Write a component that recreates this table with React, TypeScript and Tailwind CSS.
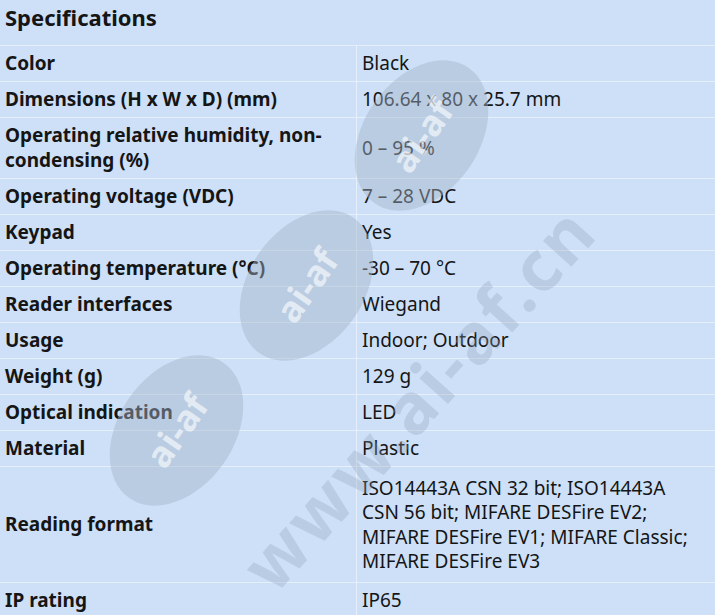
const rows: { label: string; value: string; tall?: boolean }[] = [
  { label: "Color", value: "Black" },
  { label: "Dimensions (H x W x D) (mm)", value: "106.64 x 80 x 25.7 mm" },
  { label: "Operating relative humidity, non-condensing (%)", value: "0 – 95 %" },
  { label: "Operating voltage (VDC)", value: "7 – 28 VDC" },
  { label: "Keypad", value: "Yes" },
  { label: "Operating temperature (°C)", value: "-30 – 70 °C" },
  { label: "Reader interfaces", value: "Wiegand" },
  { label: "Usage", value: "Indoor; Outdoor" },
  { label: "Weight (g)", value: "129 g" },
  { label: "Optical indication", value: "LED" },
  { label: "Material", value: "Plastic" },
  {
    label: "Reading format",
    value:
      "ISO14443A CSN 32 bit; ISO14443A CSN 56 bit; MIFARE DESFire EV2; MIFARE DESFire EV1; MIFARE Classic; MIFARE DESFire EV3",
    tall: true,
  },
  { label: "IP rating", value: "IP65" },
];

// watermark stamp, sits over the table
const Stamp = ({ className }: { className: string }) => (
  <div
    className={`absolute flex w-[165px] h-[115px] items-center justify-center rounded-[50%] bg-[#a3b3c8]/45 text-[36px] font-bold text-white/60 -rotate-[55deg] ${className}`}
  >
    ai-af
  </div>
);

export default function App() {
  return (
    <div className="relative w-[715px] h-[615px] overflow-hidden bg-[#cde0f7] text-[#151515] font-['Noto_Sans',sans-serif]">
      <div className="h-[46px] border-b border-[#e6f0fc] px-[5px] pt-[1px]">
        <h2 className="text-[22px] font-bold leading-[32px]">Specifications</h2>
      </div>
      {rows.map((r) => (
        <div
          key={r.label}
          className="grid grid-cols-[357px_1fr] border-b border-[#e6f0fc] text-[19px]"
        >
          <div className="flex items-center border-r border-[#e6f0fc] px-[5px] py-[5px] font-bold leading-[25px]">
            {r.label}
          </div>
          <div
            className={`flex items-center pl-[5px] ${
              r.tall ? "py-[9px] pr-[14px] leading-[24.3px]" : "py-[5px] pr-[5px] leading-[24.6px]"
            }`}
          >
            {r.value}
          </div>
        </div>
      ))}

      <div className="pointer-events-none absolute inset-0">
        <Stamp className="left-[339px] top-[78px]" />
        <Stamp className="left-[224px] top-[228px]" />
        <Stamp className="left-[94px] top-[373px]" />
        <div className="absolute left-[128px] top-[345px] w-[580px] -rotate-[48deg] text-center text-[70px] font-bold tracking-[3px] text-[#8e9fb5]/30">
          www.ai-af.cn
        </div>
      </div>
    </div>
  );
}
